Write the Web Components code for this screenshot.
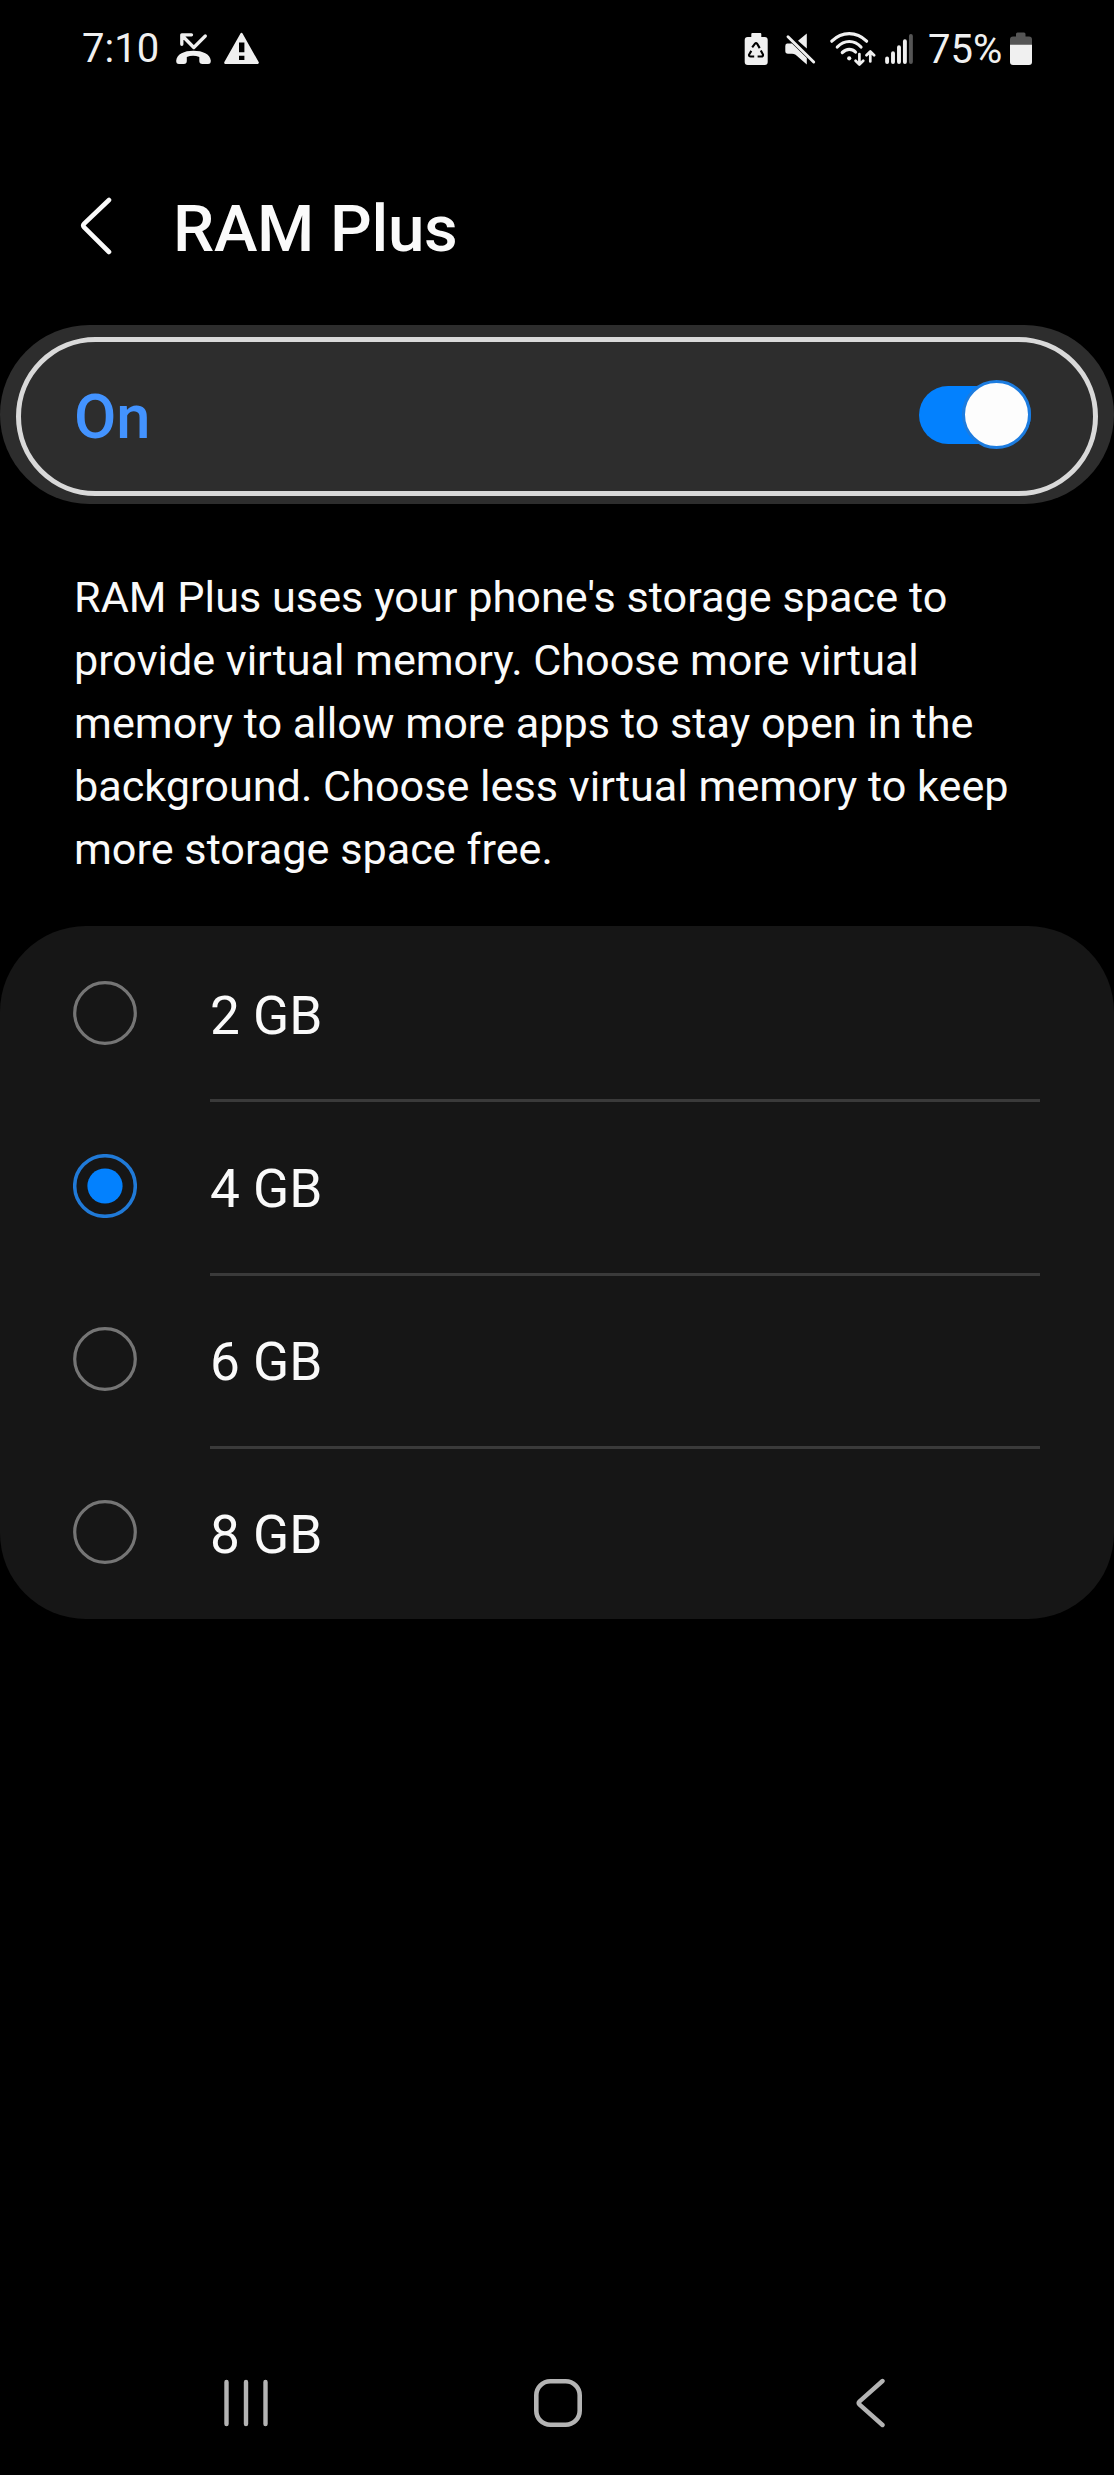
<!DOCTYPE html>
<html lang="en">
<head>
<meta charset="utf-8">
<title>RAM Plus</title>
<style>
  html, body { margin: 0; background: #000; }
  body { font-family: Roboto, "Liberation Sans", sans-serif; color: #fafafa; }
</style>
</head>
<body>
<ram-plus-screen></ram-plus-screen>
<script>
const define = (name, html) => {
  const template = document.createElement('template');
  template.innerHTML = html;
  customElements.define(name, class extends HTMLElement {
    constructor() {
      super();
      this.attachShadow({ mode: 'open' }).append(template.content.cloneNode(true));
    }
  });
};

define('status-bar', `
<style>
  :host { display: flex; justify-content: space-between; align-items: center; height: 97px; box-sizing: border-box; padding: 0 82px; color: #f0f0f0; font-size: 40px; line-height: 47px; }
  div { display: flex; align-items: center; }
  svg { display: block; flex: none; }
  .time { width: 78px; margin-right: 15px; white-space: nowrap; }
  .pct { width: 75px; margin: 1px 7px 0 14px; white-space: nowrap; }
</style>
<div>
  <span class="time">7:10</span>
  <svg width="37" height="34" viewBox="175 31 37 34" fill="none" stroke="#f0f0f0">
    <path d="M205.300 35L193.800 46.500 183 35.500M191.500 33.800H181.800V43.300" stroke-width="3.300" stroke-linecap="round" stroke-linejoin="round"/>
    <path d="M176.200 59.500C177 53 184 49.700 193.400 49.700S210 53 210.800 59.500Q211 63 208 63H202.500Q199.300 63 199.300 60V56Q193 53.500 186.800 56V60Q186.800 63 183.800 63H179Q176 63 176.200 59.500Z" fill="#f0f0f0" stroke="none"/>
  </svg>
  <svg width="37" height="34" viewBox="223 31 37 34" style="margin-left:11px">
    <path d="M241.500 33L257.600 61.700H225.400Z" fill="#f0f0f0" stroke="#f0f0f0" stroke-width="2.400" stroke-linejoin="round"/>
    <path d="M239 41.500h5.400v9.800H239zM239 54.800h5.400v4.200H239z" fill="#000"/>
  </svg>
</div>
<div>
  <svg width="25" height="34" viewBox="745 31.500 25 34">
    <path d="M752.300 36.500V33.500q0-1 1-1h8q1 0 1 1V36.500h3.400q3 0 3 3V61.500q0 3-3 3H748.700q-3 0-3-3V39.500q0-3 3-3z" fill="#f0f0f0"/>
    <path d="M753.200 46.800L756 43.200Q757 42 758.100 43.200L760.700 47.600M752.300 50.400L750 54.300Q749.800 56 751.700 56H755.200M761.800 50L764 54Q764.200 56 762.400 56H758.600" fill="none" stroke="#000" stroke-width="2.100"/>
  </svg>
  <svg width="33" height="34" viewBox="785 31.500 33 34" style="margin-left:15px">
    <path d="M807.800 33V48L799 40.300ZM788 43H793L807.800 57.600V64L796.600 54.300Q795 53.300 793 53.300H789Q786.300 53.300 786.300 50.500V45.500Q786.300 43 788 43Z" fill="#f0f0f0"/>
    <path d="M789 36.200L814.700 61.500" stroke="#f0f0f0" stroke-width="2.900" stroke-linecap="round"/>
  </svg>
  <svg width="47" height="36" viewBox="830 30 47 36" style="margin-left:12px" fill="none" stroke="#f0f0f0" stroke-linecap="round" stroke-linejoin="round">
    <path d="M832.800 40.200Q840.500 32.700 850.200 32.700T867.600 40.200M838.300 46Q843.500 40.500 850.300 40.500T862 46M843.300 51.500Q846.500 48.300 850.200 48.300T856.500 51" stroke-width="3.200"/>
    <circle cx="850.200" cy="57.300" r="2.100" fill="#f0f0f0" stroke="none"/>
    <path d="M860.400 53V63.200M856.600 59.800L860.400 63.600 864.200 59.800M871.300 60.500V51M867.500 54.300L871.300 50.500 875.100 54.300" stroke-width="2.700"/>
  </svg>
  <svg width="29" height="34" viewBox="886 31 29 34" style="margin-left:9px" stroke="#f0f0f0" stroke-width="3.900" stroke-linecap="round">
    <path d="M888.100 57.500V61M894 52.200V61M900 46.300V61M905.900 40.300V61"/><path d="M911.900 34.900V61" stroke="#555"/>
  </svg>
  <span class="pct">75%</span>
  <svg width="22" height="34" viewBox="1010 31 22 34">
    <path d="M1016 35.500V33q0-1.500 1.500-1.500h6.500q1.500 0 1.500 1.500V35.500h3.500q3 0 3 3V44H1010V38.500q0-3 3-3z" fill="#555"/>
    <path d="M1010 43.800H1032V61q0 3-3 3H1013q-3 0-3-3z" fill="#f0f0f0"/>
  </svg>
</div>`);

define('page-header', `
<style>
  :host { display: flex; align-items: center; box-sizing: border-box; height: 228px; padding: 34px 0 0 80px; }
  svg { display: block; flex: none; margin: -4px 60px 0 0; }
  h1 { margin: 0; font-size: 65.500px; line-height: 77px; font-weight: 500; letter-spacing: -.3px; }
</style>
<svg width="33" height="60" viewBox="80 196 33 60"><path d="M109 200L84.200 223.700Q82.400 225.500 84.200 227.300L109 252" fill="none" stroke="#fafafa" stroke-width="4.600" stroke-linecap="round"/></svg>
<h1><slot></slot></h1>`);

define('toggle-switch', `
<style>
  :host { display: flex; align-items: center; justify-content: flex-end; width: 112px; height: 58px; border-radius: 29px; background: #0381fe; }
  i { display: block; flex: none; box-sizing: border-box; width: 69px; height: 69px; border: 3px solid #1c7ce0; border-radius: 50%; background: #fdfdfd; }
</style><i></i>`);

define('master-switch', `
<style>
  :host { display: block; box-sizing: border-box; height: 179px; padding: 12px 16px 8px; border-radius: 89.500px; background: #2d2d2d; }
  div { display: flex; align-items: center; justify-content: space-between; box-sizing: border-box; height: 159px; padding: 0 62px 0 53px; border: 5px solid #d9d9d9; border-radius: 79.500px; }
  span { padding-top: 2px; font-size: 61.500px; line-height: 71px; font-weight: 500; color: #4393ff; }
  toggle-switch { margin-top: -4px; }
</style>
<div><span><slot></slot></span><toggle-switch></toggle-switch></div>`);

define('help-text', `
<style>
  :host { display: block; box-sizing: border-box; height: 422px; padding: 63px 74px 0; font-size: 43.200px; line-height: 62.900px; white-space: nowrap; }
</style><slot></slot>`);

define('option-list', `
<style>
  :host { display: flex; flex-direction: column; box-sizing: border-box; height: 693px; border-radius: 86px; background: #161616; }
</style><slot></slot>`);

define('radio-option', `
<style>
  :host { display: flex; align-items: center; flex: 1; padding-left: 73px; }
  svg { display: block; flex: none; }
  circle { fill: none; stroke: #757575; stroke-width: 3.200px; }
  .dot { display: none; }
  :host([checked]) circle { stroke: #207ad8; stroke-width: 3.500px; }
  :host([checked]) .dot { display: block; fill: #0381fe; stroke: none; }
  .label { display: flex; align-items: center; box-sizing: border-box; width: 830px; height: 100%; margin-left: 73px; padding-top: 3px; border-top: 3px solid transparent; font-size: 53.200px; line-height: 62px; }
  :host([divided]) .label { border-top-color: #3a3a3a; }
</style>
<svg width="64" height="64" viewBox="0 0 64 64"><circle cx="32" cy="32" r="30.300"/><circle class="dot" cx="32" cy="32" r="17.600"/></svg>
<span class="label"><slot></slot></span>`);

define('nav-bar', `
<style>
  :host { display: flex; justify-content: center; align-items: center; height: 144px; padding-left: 2px; }
  span { display: flex; justify-content: center; width: 312px; }
  svg { display: block; }
</style>
<span><svg width="44" height="50" viewBox="0 0 44 50" stroke="#b4b4b4" stroke-width="4.400" stroke-linecap="round"><path d="M2.500 4V46M22 4V46M41.500 4V46"/></svg></span>
<span><svg width="50" height="50" viewBox="0 0 50 50"><rect x="3.300" y="3.300" width="43.400" height="43.400" rx="14" fill="none" stroke="#b4b4b4" stroke-width="4.600"/></svg></span>
<span><svg width="30" height="50" viewBox="0 0 30 50"><path d="M27.500 3L4.300 23.700Q2.900 25 4.300 26.300L27.500 47" fill="none" stroke="#b4b4b4" stroke-width="4.400" stroke-linecap="round"/></svg></span>`);

define('ram-plus-screen', `
<style>
  :host { display: flex; flex-direction: column; width: 1114px; height: 2475px; background: #000; }
  nav-bar { margin-top: auto; }
  .loose { letter-spacing: .03px; }
  .tight { letter-spacing: -.05px; }
</style>
<status-bar></status-bar>
<page-header>RAM Plus</page-header>
<master-switch>On</master-switch>
<help-text><span class="loose">RAM Plus uses your phone's storage space to</span><br><span class="tight">provide virtual memory. Choose more virtual</span><br><span class="loose">memory to allow more apps to stay open in the</span><br>background. Choose less virtual memory to keep<br>more storage space free.</help-text>
<option-list>
  <radio-option>2 GB</radio-option>
  <radio-option divided checked>4 GB</radio-option>
  <radio-option divided>6 GB</radio-option>
  <radio-option divided>8 GB</radio-option>
</option-list>
<nav-bar></nav-bar>`);
</script>
</body>
</html>
